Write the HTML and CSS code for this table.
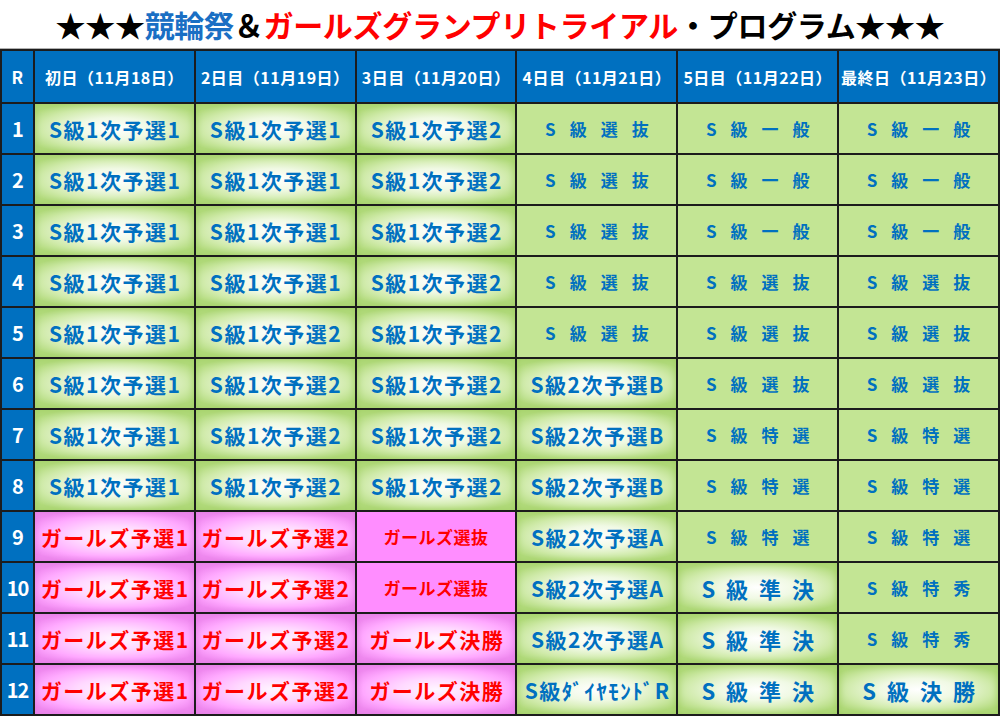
FILE: index.html
```html
<!DOCTYPE html>
<html lang="ja">
<head>
<meta charset="utf-8">
<link rel="stylesheet" href="styles.css">
</head>
<body>
<h1 class="title">★★★<span class="t-blue">競輪祭</span>＆<span class="t-red">ガールズグランプリトライアル</span>・プログラム★★★</h1>
<div class="table">
  <div class="hd r">R</div>
  <div class="hd">初日（11月18日）</div>
  <div class="hd">2日目（11月19日）</div>
  <div class="hd">3日目（11月20日）</div>
  <div class="hd">4日目（11月21日）</div>
  <div class="hd">5日目（11月22日）</div>
  <div class="hd">最終日（11月23日）</div>

  <div class="num">1</div>
  <div class="c gg"><span class="big">S級1次予選1</span></div>
  <div class="c gg"><span class="big">S級1次予選1</span></div>
  <div class="c gg"><span class="big">S級1次予選2</span></div>
  <div class="c fg"><span class="sp">S級選抜</span></div>
  <div class="c fg"><span class="sp">S級一般</span></div>
  <div class="c fg"><span class="sp">S級一般</span></div>

  <div class="num">2</div>
  <div class="c gg"><span class="big">S級1次予選1</span></div>
  <div class="c gg"><span class="big">S級1次予選1</span></div>
  <div class="c gg"><span class="big">S級1次予選2</span></div>
  <div class="c fg"><span class="sp">S級選抜</span></div>
  <div class="c fg"><span class="sp">S級一般</span></div>
  <div class="c fg"><span class="sp">S級一般</span></div>

  <div class="num">3</div>
  <div class="c gg"><span class="big">S級1次予選1</span></div>
  <div class="c gg"><span class="big">S級1次予選1</span></div>
  <div class="c gg"><span class="big">S級1次予選2</span></div>
  <div class="c fg"><span class="sp">S級選抜</span></div>
  <div class="c fg"><span class="sp">S級一般</span></div>
  <div class="c fg"><span class="sp">S級一般</span></div>

  <div class="num">4</div>
  <div class="c gg"><span class="big">S級1次予選1</span></div>
  <div class="c gg"><span class="big">S級1次予選1</span></div>
  <div class="c gg"><span class="big">S級1次予選2</span></div>
  <div class="c fg"><span class="sp">S級選抜</span></div>
  <div class="c fg"><span class="sp">S級選抜</span></div>
  <div class="c fg"><span class="sp">S級選抜</span></div>

  <div class="num">5</div>
  <div class="c gg"><span class="big">S級1次予選1</span></div>
  <div class="c gg"><span class="big">S級1次予選2</span></div>
  <div class="c gg"><span class="big">S級1次予選2</span></div>
  <div class="c fg"><span class="sp">S級選抜</span></div>
  <div class="c fg"><span class="sp">S級選抜</span></div>
  <div class="c fg"><span class="sp">S級選抜</span></div>

  <div class="num">6</div>
  <div class="c gg"><span class="big">S級1次予選1</span></div>
  <div class="c gg"><span class="big">S級1次予選2</span></div>
  <div class="c gg"><span class="big">S級1次予選2</span></div>
  <div class="c gg"><span class="big">S級2次予選B</span></div>
  <div class="c fg"><span class="sp">S級選抜</span></div>
  <div class="c fg"><span class="sp">S級選抜</span></div>

  <div class="num">7</div>
  <div class="c gg"><span class="big">S級1次予選1</span></div>
  <div class="c gg"><span class="big">S級1次予選2</span></div>
  <div class="c gg"><span class="big">S級1次予選2</span></div>
  <div class="c gg"><span class="big">S級2次予選B</span></div>
  <div class="c fg"><span class="sp">S級特選</span></div>
  <div class="c fg"><span class="sp">S級特選</span></div>

  <div class="num">8</div>
  <div class="c gg"><span class="big">S級1次予選1</span></div>
  <div class="c gg"><span class="big">S級1次予選2</span></div>
  <div class="c gg"><span class="big">S級1次予選2</span></div>
  <div class="c gg"><span class="big">S級2次予選B</span></div>
  <div class="c fg"><span class="sp">S級特選</span></div>
  <div class="c fg"><span class="sp">S級特選</span></div>

  <div class="num">9</div>
  <div class="c gp"><span class="big red">ガールズ予選1</span></div>
  <div class="c gp"><span class="big red">ガールズ予選2</span></div>
  <div class="c fp"><span class="small red">ガールズ選抜</span></div>
  <div class="c gg"><span class="big">S級2次予選A</span></div>
  <div class="c fg"><span class="sp">S級特選</span></div>
  <div class="c fg"><span class="sp">S級特選</span></div>

  <div class="num">10</div>
  <div class="c gp"><span class="big red">ガールズ予選1</span></div>
  <div class="c gp"><span class="big red">ガールズ予選2</span></div>
  <div class="c fp"><span class="small red">ガールズ選抜</span></div>
  <div class="c gg"><span class="big">S級2次予選A</span></div>
  <div class="c gg"><span class="spbig">S級準決</span></div>
  <div class="c fg"><span class="sp">S級特秀</span></div>

  <div class="num">11</div>
  <div class="c gp"><span class="big red">ガールズ予選1</span></div>
  <div class="c gp"><span class="big red">ガールズ予選2</span></div>
  <div class="c gp"><span class="big red">ガールズ決勝</span></div>
  <div class="c gg"><span class="big">S級2次予選A</span></div>
  <div class="c gg"><span class="spbig">S級準決</span></div>
  <div class="c fg"><span class="sp">S級特秀</span></div>

  <div class="num">12</div>
  <div class="c gp"><span class="big red">ガールズ予選1</span></div>
  <div class="c gp"><span class="big red">ガールズ予選2</span></div>
  <div class="c gp"><span class="big red">ガールズ決勝</span></div>
  <div class="c gg"><span class="big">S級ﾀﾞｲﾔﾓﾝﾄﾞR</span></div>
  <div class="c gg"><span class="spbig">S級準決</span></div>
  <div class="c gg"><span class="spbig">S級決勝</span></div>
</div>
</body>
</html>
```

FILE: styles.css
```css
html, body {
  margin: 0;
  padding: 0;
  background: #ffffff;
}
body {
  width: 1000px;
  height: 716px;
  overflow: hidden;
  font-family: "Noto Sans CJK JP", "Noto Sans", sans-serif;
  font-weight: 700;
}
.title {
  margin: 0;
  height: 49px;
  border-bottom: 1px solid #b0b0b0;
  box-sizing: border-box;
  text-align: center;
  font-size: 30px;
  line-height: 48px;
  letter-spacing: -0.3px;
  font-weight: 700;
  color: #000;
  white-space: nowrap;
}
.t-blue { color: #1a6fc4; }
.t-red { color: #ff0000; }

.table {
  display: grid;
  grid-template-columns: 31px repeat(6, 1fr);
  grid-template-rows: 51px repeat(12, 49px);
  gap: 2px;
  padding: 2px;
  background: #1c1c1c;
  height: 667px;
  box-sizing: border-box;
}
.hd {
  background: #0070c0;
  color: #ffffff;
  font-size: 16px;
  letter-spacing: 0.5px;
  display: flex;
  align-items: center;
  justify-content: center;
  white-space: nowrap;
}
.hd.r { font-size: 17px; }
.num {
  background: #0070c0;
  color: #ffffff;
  font-size: 20px;
  letter-spacing: -1px;
  display: flex;
  align-items: center;
  justify-content: center;
}
.c {
  display: flex;
  align-items: center;
  justify-content: center;
  white-space: nowrap;
  color: #0070c0;
}
.gg {
  background: radial-gradient(ellipse 62% 58% at 50% 50%, #ffffff 0%, #f0f9e4 38%, #cfeaa9 75%, #b2da7c 100%);
  box-shadow: inset 0 0 7px #9fcf62;
}
.fg {
  background: #c3e594;
}
.gp {
  background: radial-gradient(ellipse 62% 58% at 50% 50%, #fff6ff 0%, #ffd9ff 38%, #ffaaff 75%, #f08af0 100%);
  box-shadow: inset 0 0 7px #e17ae1;
}
.fp {
  background: #ff8dff;
}
.big {
  font-size: 21px;
  letter-spacing: 1.5px;
  padding-left: 1.5px;
}
.sp {
  font-size: 17px;
  letter-spacing: 14px;
  padding-left: 14px;
}
.spbig {
  font-size: 22px;
  letter-spacing: 11px;
  padding-left: 11px;
}
.small {
  font-size: 17px;
  letter-spacing: 0.5px;
}
.red { color: #ff0000; }
```
